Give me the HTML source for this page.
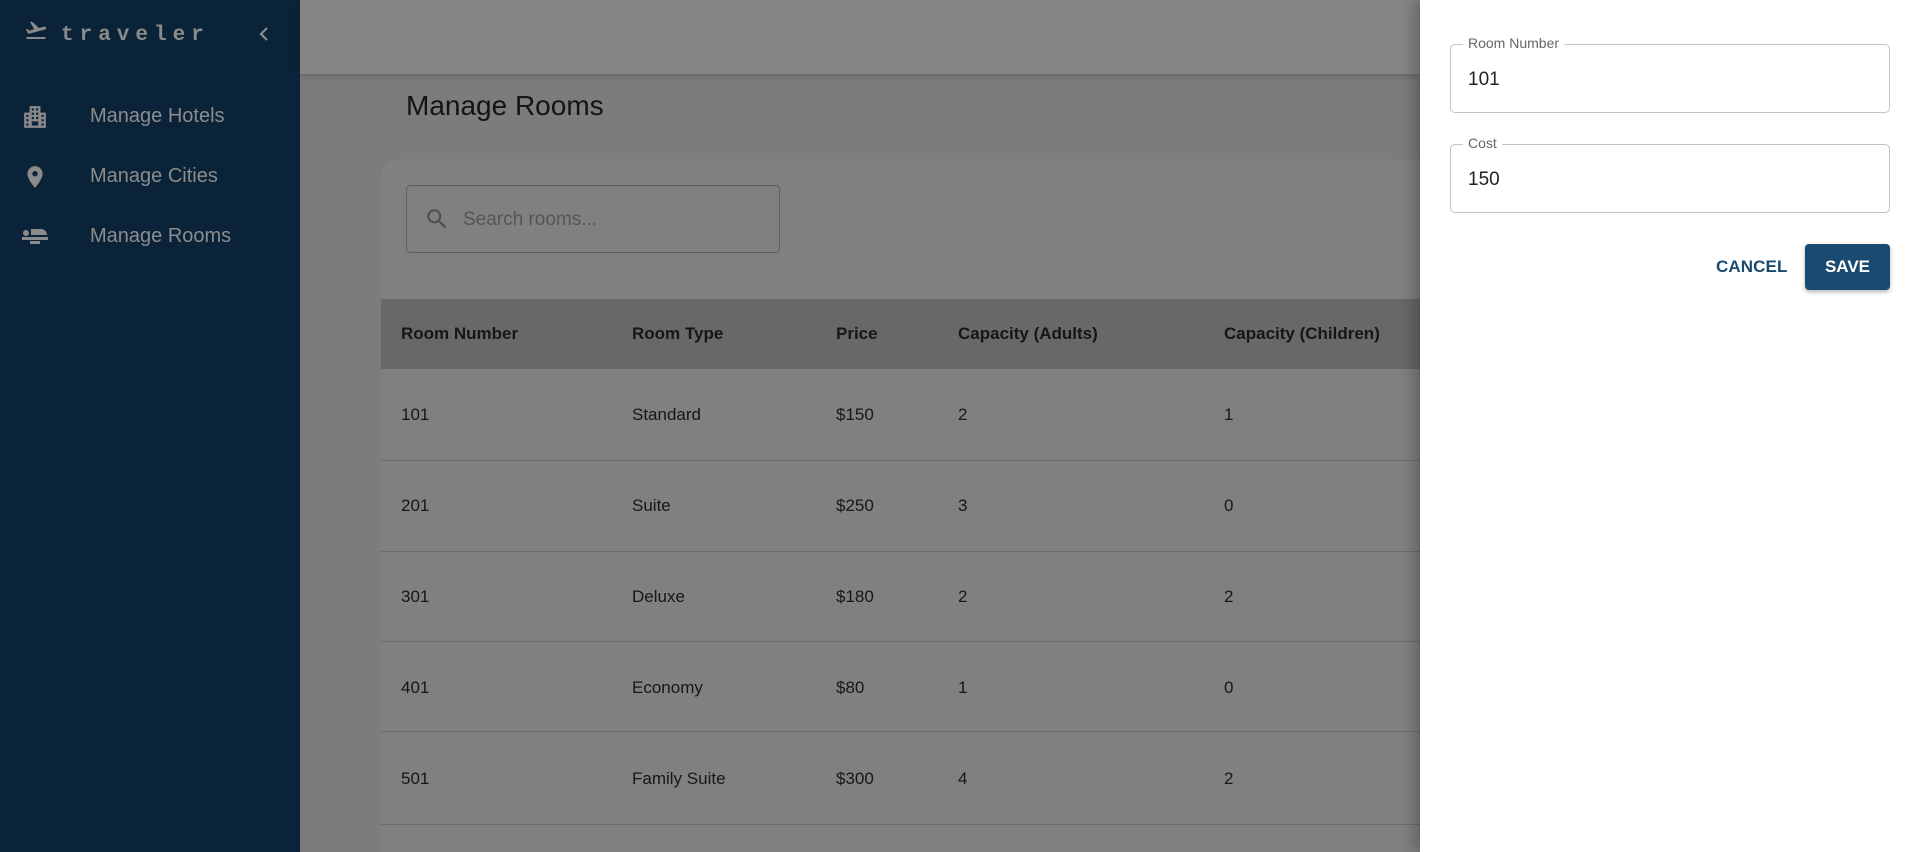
<!DOCTYPE html>
<html><head><meta charset="utf-8"><style>
*{box-sizing:border-box;margin:0;padding:0}
html,body{width:1918px;height:852px;overflow:hidden}
body{font-family:"Liberation Sans",sans-serif;background:#7b7c7e;position:relative}
.sb{position:absolute;left:0;top:0;width:300px;height:852px;background:#0a2339}
.sb .top{height:74px;border-bottom:1px solid #0d2840;position:relative}
.logo{position:absolute;left:61px;top:24px;font-family:"Liberation Mono",monospace;font-weight:bold;font-size:21px;letter-spacing:6px;color:#8a8a8a}
.mi{position:absolute;left:90px;font-size:20px;color:#8c8c8c}
.hdr{position:absolute;left:300px;top:0;width:1120px;height:74px;background:#858585;box-shadow:0 2px 6px rgba(0,0,0,.2)}
h1{position:absolute;left:406px;top:90px;font-weight:normal;font-size:28px;color:#141414}
.card{position:absolute;left:381px;top:159px;width:1100px;height:693px;background:#808080;border-radius:16px 16px 0 0}
.search{position:absolute;left:406px;top:185px;width:374px;height:68px;border:1px solid #606060;border-radius:4px}
.search span{position:absolute;left:56px;top:23px;font-size:19px;color:#555}
.th{position:absolute;left:381px;top:299px;width:1040px;height:70px;background:#686868}
.t{position:absolute;font-size:17px;color:#161616}
.b{font-weight:bold}
.line{position:absolute;left:381px;width:1040px;height:1px;background:#6c6c6c}
.drawer{position:absolute;left:1420px;top:0;width:498px;height:852px;background:#fff;box-shadow:-6px 0 14px rgba(0,0,0,.25)}
.f{position:absolute;left:30px;width:440px;height:69px;border:1px solid #c4c4c4;border-radius:5px}
.f label{position:absolute;left:12px;top:-10px;background:#fff;padding:0 5px;font-size:14px;color:#666}
.f span{position:absolute;left:17px;top:24px;font-size:19px;color:#222}
.cancel{position:absolute;left:296px;top:257px;font-size:17px;font-weight:bold;color:#1a4a6e;letter-spacing:.1px}
.save{position:absolute;left:385px;top:244px;width:85px;height:46px;background:#1a4a70;border-radius:4px;color:#fff;font-weight:bold;font-size:17px;text-align:center;line-height:46px;box-shadow:0 2px 4px rgba(0,0,0,.3)}
</style></head><body>
<div class="sb"><div class="top">
<svg style="position:absolute;left:23px;top:18px" width="26" height="24" viewBox="0 0 24 24"><path fill="#8a8a8a" d="M2.5 19h19v2h-19zM22.07 9.64c-.21-.8-1.04-1.28-1.84-1.06L14.92 10l-6.9-6.43-1.93.51 4.14 7.17-4.97 1.33-1.97-1.54-1.45.39 2.59 4.49 16.57-4.44c.81-.23 1.28-1.05 1.07-1.84z"/></svg>
<div class="logo">traveler</div>
<svg style="position:absolute;left:256px;top:25px" width="16" height="18" viewBox="0 0 16 18"><path d="M11 3 5 9l6 6" stroke="#8a8a8a" stroke-width="2.2" fill="none"/></svg>
</div>
<svg style="position:absolute;left:22px;top:104px" width="26" height="26" viewBox="0 0 24 24"><path fill="#8a8a8a" d="M7 2h10v6h5v14H2V8h5zM9 4v2h2V4zm4 0v2h2V4zM9 8v2h2V8zm4 0v2h2V8zM4 10v2h2v-2zm5 2v2h2v-2zm4 0v2h2v-2zm5-2v2h2v-2zM4 14v2h2v-2zm14 0v2h2v-2zM4 18v2h2v-2zm5-2v4h6v-4zm9 2v2h2v-2z"/></svg>
<div class="mi" style="top:105px">Manage Hotels</div>
<svg style="position:absolute;left:22px;top:164px" width="26" height="26" viewBox="0 0 24 24"><path fill="#8a8a8a" d="M12 2C8.13 2 5 5.13 5 9c0 5.250 7 13 7 13s7-7.75 7-13c0-3.87-3.130-7-7-7zm0 9.5a2.5 2.5 0 1 1 0-5 2.5 2.5 0 0 1 0 5z"/></svg>
<div class="mi" style="top:165px">Manage Cities</div>
<svg style="position:absolute;left:21px;top:224px" width="28" height="24" viewBox="0 0 28 24"><circle cx="5" cy="9" r="3" fill="#8a8a8a"/><path fill="#8a8a8a" d="M10 5h10a6 6 0 0 1 6 6v0H10zM1 13h26v3H1zM9 17h10v3H9z"/></svg>
<div class="mi" style="top:225px">Manage Rooms</div>
</div>
<div class="hdr"></div>
<h1>Manage Rooms</h1>
<div class="card"></div>
<div class="search"><svg style="position:absolute;left:17px;top:20px" width="26" height="26" viewBox="0 0 24 24"><path fill="#505050" d="M15.5 14h-.79l-.28-.27A6.47 6.47 0 0 0 16 9.5 6.5 6.5 0 1 0 9.5 16c1.61 0 3.09-.59 4.23-1.57l.27.28v.79l5 4.99L20.49 19zm-6 0C7.01 14 5 11.99 5 9.5S7.01 5 9.5 5 14 7.01 14 9.5 11.99 14 9.5 14z"/></svg><span>Search rooms...</span></div>
<div class="th"></div>
<div class="t b" style="left:401px;top:324px">Room Number</div>
<div class="t b" style="left:632px;top:324px">Room Type</div>
<div class="t b" style="left:836px;top:324px">Price</div>
<div class="t b" style="left:958px;top:324px">Capacity (Adults)</div>
<div class="t b" style="left:1224px;top:324px">Capacity (Children)</div>

<div class="t" style="left:401px;top:405px">101</div><div class="t" style="left:632px;top:405px">Standard</div><div class="t" style="left:836px;top:405px">$150</div><div class="t" style="left:958px;top:405px">2</div><div class="t" style="left:1224px;top:405px">1</div>
<div class="line" style="top:460px"></div>
<div class="t" style="left:401px;top:496px">201</div><div class="t" style="left:632px;top:496px">Suite</div><div class="t" style="left:836px;top:496px">$250</div><div class="t" style="left:958px;top:496px">3</div><div class="t" style="left:1224px;top:496px">0</div>
<div class="line" style="top:551px"></div>
<div class="t" style="left:401px;top:587px">301</div><div class="t" style="left:632px;top:587px">Deluxe</div><div class="t" style="left:836px;top:587px">$180</div><div class="t" style="left:958px;top:587px">2</div><div class="t" style="left:1224px;top:587px">2</div>
<div class="line" style="top:641px"></div>
<div class="t" style="left:401px;top:678px">401</div><div class="t" style="left:632px;top:678px">Economy</div><div class="t" style="left:836px;top:678px">$80</div><div class="t" style="left:958px;top:678px">1</div><div class="t" style="left:1224px;top:678px">0</div>
<div class="line" style="top:731px"></div>
<div class="t" style="left:401px;top:769px">501</div><div class="t" style="left:632px;top:769px">Family Suite</div><div class="t" style="left:836px;top:769px">$300</div><div class="t" style="left:958px;top:769px">4</div><div class="t" style="left:1224px;top:769px">2</div>
<div class="line" style="top:824px"></div>

<div class="drawer">
<div class="f" style="top:44px"><label>Room Number</label><span>101</span></div>
<div class="f" style="top:144px"><label>Cost</label><span>150</span></div>
<div class="cancel">CANCEL</div>
<div class="save">SAVE</div>
</div>
</body></html>
